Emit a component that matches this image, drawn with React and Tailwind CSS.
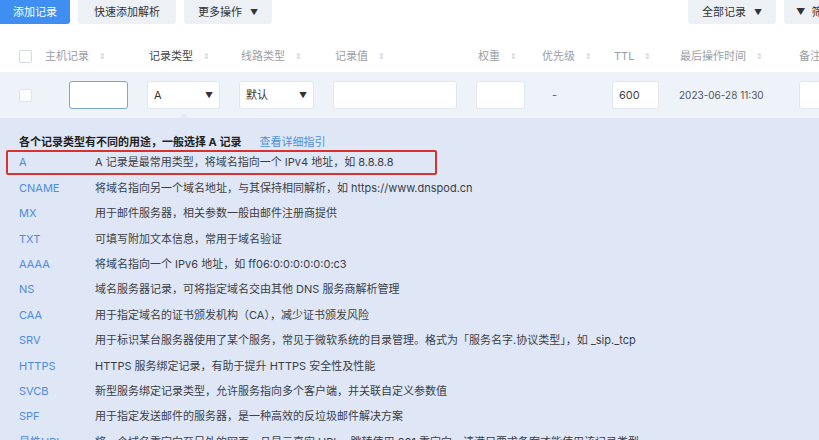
import { useState } from "react";

const types = [
  ["A", "A 记录是最常用类型，将域名指向一个 IPv4 地址，如 8.8.8.8"],
  ["CNAME", "将域名指向另一个域名地址，与其保持相同解析，如 https://www.dnspod.cn"],
  ["MX", "用于邮件服务器，相关参数一般由邮件注册商提供"],
  ["TXT", "可填写附加文本信息，常用于域名验证"],
  ["AAAA", "将域名指向一个 IPv6 地址，如 ff06:0:0:0:0:0:0:c3"],
  ["NS", "域名服务器记录，可将指定域名交由其他 DNS 服务商解析管理"],
  ["CAA", "用于指定域名的证书颁发机构（CA），减少证书颁发风险"],
  ["SRV", "用于标识某台服务器使用了某个服务，常见于微软系统的目录管理。格式为「服务名字.协议类型」，如 _sip._tcp"],
  ["HTTPS", "HTTPS 服务绑定记录，有助于提升 HTTPS 安全性及性能"],
  ["SVCB", "新型服务绑定记录类型，允许服务指向多个客户端，并关联自定义参数值"],
  ["SPF", "用于指定发送邮件的服务器，是一种高效的反垃圾邮件解决方案"],
  ["显性URL", "将一个域名重定向至另外的网页，且显示真实 URL，跳转使用 301 重定向，请满足要求备案才能使用该记录类型"],
];

function Sort() {
  return <span className="ml-[10px] text-[8px] text-[#c4c8cf] leading-none">⇕</span>;
}

function Caret() {
  return <span className="text-[8px] text-[#333]">▼</span>;
}

function Head({ w, children, dark }) {
  return (
    <div className={`${w} shrink-0 flex items-center ${dark ? "text-[#444]" : "text-[#9a9ea6]"}`}>
      <span className="ml-px">{children}</span>
      <Sort />
    </div>
  );
}

export default function App() {
  const [host, setHost] = useState("");

  return (
    <div
      className="w-[819px] h-[440px] overflow-hidden bg-[#dfe7f6] text-[11px]"
      style={{ fontFamily: 'Inter, "Noto Sans CJK SC", sans-serif' }}
    >
      {/* toolbar */}
      <div className="h-[40px] bg-white flex items-start">
        <button className="h-[24px] w-[70px] shrink-0 bg-[#3f8ef2] text-white rounded-br-[3px]">添加记录</button>
        <button className="ml-[8px] h-[24px] w-[98px] shrink-0 bg-[#edf0f5] text-[#333] rounded-b-[3px]">快速添加解析</button>
        <button className="ml-[8px] h-[24px] w-[88px] shrink-0 bg-[#edf0f5] text-[#333] rounded-b-[3px] flex items-center justify-center gap-[8px]">
          更多操作 <Caret />
        </button>
        <div className="flex-1" />
        <button className="h-[24px] w-[88px] shrink-0 bg-[#edf0f5] text-[#333] rounded-b-[3px] flex items-center justify-center gap-[8px]">
          全部记录 <Caret />
        </button>
        <button className="ml-[8px] h-[24px] w-[35px] bg-[#edf0f5] text-[#333] rounded-bl-[3px] flex items-center pl-[12px] gap-[6px] shrink-0 overflow-hidden whitespace-nowrap">
          <span className="text-[9px] font-bold">▼</span>筛选
        </button>
      </div>

      {/* header */}
      <div className="h-[32px] bg-white flex items-center whitespace-nowrap">
        <div className="w-[44px] shrink-0 pl-[19px]">
          <div className="w-[13px] h-[13px] border border-[#d5d9e0] rounded-[2px] bg-white" />
        </div>
        <Head w="w-[104px]">主机记录</Head>
        <Head w="w-[92px]" dark>记录类型</Head>
        <Head w="w-[94px]">线路类型</Head>
        <Head w="w-[143px]">记录值</Head>
        <Head w="w-[64px]">权重</Head>
        <Head w="w-[72px]">优先级</Head>
        <Head w="w-[66px]">TTL</Head>
        <Head w="w-[119px]">最后操作时间</Head>
        <div className="shrink-0 text-[#9a9ea6] ml-px">备注</div>
      </div>

      {/* edit row */}
      <div className="relative h-[46px] bg-[#eef2f9] flex items-center whitespace-nowrap">
        <div className="w-[44px] shrink-0 pl-[19px]">
          <div className="w-[13px] h-[13px] border border-[#dfe3ea] rounded-[2px] bg-white" />
        </div>
        <div className="w-[103px] shrink-0 pl-[25px]">
          <input
            value={host}
            onChange={(e) => setHost(e.target.value)}
            className="w-[59px] h-[28px] border border-[#7aa4d8] rounded-[3px] bg-white outline-none px-2"
          />
        </div>
        <div className="w-[92px] shrink-0">
          <div className="w-[73px] h-[28px] bg-white border border-[#e3e7ee] rounded-[3px] flex items-center justify-between px-[6px] text-[#333]">
            A <Caret />
          </div>
        </div>
        <div className="w-[94px] shrink-0">
          <div className="w-[75px] h-[28px] bg-white border border-[#e3e7ee] rounded-[3px] flex items-center justify-between px-[6px] text-[#333]">
            默认 <Caret />
          </div>
        </div>
        <div className="w-[143px] shrink-0">
          <div className="w-[124px] h-[28px] bg-white border border-[#e3e7ee] rounded-[3px]" />
        </div>
        <div className="w-[64px] shrink-0">
          <div className="w-[49px] h-[28px] bg-white border border-[#e3e7ee] rounded-[3px]" />
        </div>
        <div className="w-[72px] shrink-0 pl-[12px] text-[#666]">-</div>
        <div className="w-[67px] shrink-0">
          <div className="w-[47px] h-[28px] bg-white border border-[#e3e7ee] rounded-[3px] flex items-center pl-[6px] text-[#444]">
            600
          </div>
        </div>
        <div className="w-[120px] shrink-0 text-[#555] text-[10px]">2023-06-28 11:30</div>
        <div className="w-[40px] shrink-0 h-[28px] bg-white border border-[#e3e7ee] rounded-l-[3px]" />
        {/* caret of the type dropdown */}
        <span className="absolute left-[179px] bottom-0 w-0 h-0 border-x-[5px] border-x-transparent border-b-[5px] border-b-[#e4ebf7]" />
      </div>

      {/* type help panel */}
      <div className="pt-[16px] px-[19px] whitespace-nowrap">
        <div className="h-[16px] flex items-center font-bold text-[#222]">
          各个记录类型有不同的用途，一般选择 A 记录
          <span className="ml-[18px] font-normal text-[#4d8de0]">查看详细指引</span>
        </div>
        <div>
          {types.map(([t, d], i) => (
            <div key={t} className="relative h-[25.4px] flex items-center">
              {i === 0 && (
                <span className="absolute left-[-13px] w-[431px] top-0 bottom-0 border-2 border-[#d6322e] rounded-[2px]" />
              )}
              <span className="w-[76px] shrink-0 text-[#4d8ae0]">{t}</span>
              <span className="text-[#3a3e46]">{d}</span>
            </div>
          ))}
        </div>
      </div>
    </div>
  );
}
